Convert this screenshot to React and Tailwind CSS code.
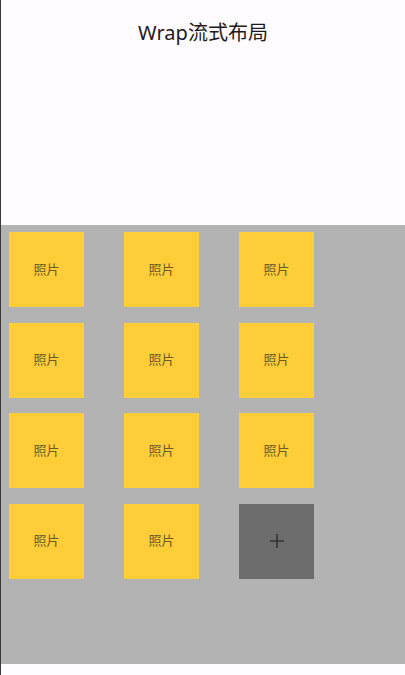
export default function App() {
    const photos = Array.from({ length: 11 }, (_, i) => i);

    return (
        <div className="h-[675px] w-[405px] flex flex-col bg-[#fffbfe] border-l border-[#3a3a3a] font-['Noto_Sans','Noto_Sans_CJK_SC',sans-serif]">
            {/* App bar */}
            <div className="h-[66px] flex items-center justify-center">
                <h1 className="text-[20px] text-[#1d1b20] leading-none">Wrap流式布局</h1>
            </div>

            <div className="h-[159px]" />

            {/* Wrap area */}
            <div className="h-[439px] bg-[#b3b3b3] pl-[8px] pt-[7px]">
                <div className="flex flex-wrap gap-x-[40px] gap-y-[15.5px] w-[350px]">
                    {photos.map((i) => (
                        <div
                            key={i}
                            className="w-[75px] h-[75px] bg-[#ffcd38] flex items-center justify-center text-[13px] text-[#6b5a2a]"
                        >
                            照片
                        </div>
                    ))}
                    <div className="w-[75px] h-[75px] bg-[#6d6d6d] flex items-center justify-center text-[#333]">
                        <svg width="14" height="14" viewBox="0 0 14 14">
                            <path d="M7 0v14M0 7h14" stroke="currentColor" strokeWidth="1.6" />
                        </svg>
                    </div>
                </div>
            </div>
        </div>
    );
}
